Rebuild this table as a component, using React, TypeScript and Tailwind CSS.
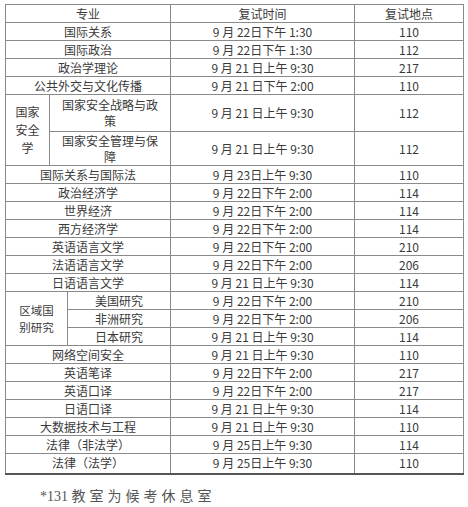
import React from "react";

type Row = { name: string; time: string; room: string };

const top: Row[] = [
  { name: "国际关系", time: "9 月 22日下午 1:30", room: "110" },
  { name: "国际政治", time: "9 月 22日下午 1:30", room: "112" },
  { name: "政治学理论", time: "9 月 21 日上午 9:30", room: "217" },
  { name: "公共外交与文化传播", time: "9 月 21 日下午 2:00", room: "110" },
];

const middle: Row[] = [
  { name: "国际关系与国际法", time: "9 月 23日上午 9:30", room: "110" },
  { name: "政治经济学", time: "9 月 22日下午 2:00", room: "114" },
  { name: "世界经济", time: "9 月 22日下午 2:00", room: "114" },
  { name: "西方经济学", time: "9 月 22日下午 2:00", room: "114" },
  { name: "英语语言文学", time: "9 月 22日下午 2:00", room: "210" },
  { name: "法语语言文学", time: "9 月 22日下午 2:00", room: "206" },
  { name: "日语语言文学", time: "9 月 21 日上午 9:30", room: "114" },
];

const area: Row[] = [
  { name: "美国研究", time: "9 月 22日下午 2:00", room: "210" },
  { name: "非洲研究", time: "9 月 22日下午 2:00", room: "206" },
  { name: "日本研究", time: "9 月 21 日上午 9:30", room: "114" },
];

const bottom: Row[] = [
  { name: "网络空间安全", time: "9 月 21 日上午 9:30", room: "110" },
  { name: "英语笔译", time: "9 月 22日下午 2:00", room: "217" },
  { name: "英语口译", time: "9 月 22日下午 2:00", room: "217" },
  { name: "日语口译", time: "9 月 21 日上午 9:30", room: "114" },
  { name: "大数据技术与工程", time: "9 月 21 日上午 9:30", room: "110" },
  { name: "法律（非法学）", time: "9 月 25日上午 9:30", room: "114" },
  { name: "法律（法学）", time: "9 月 25日上午 9:30", room: "110" },
];

const td = "border border-[#8a8a8a] p-0 text-center align-middle";

const Plain = ({ r, last }: { r: Row; last?: boolean }) => (
  <tr className={last ? "h-[20px]" : "h-[18px]"}>
    <td colSpan={3} className={td}>
      {r.name}
    </td>
    <td className={td}>{r.time}</td>
    <td className={td}>{r.room}</td>
  </tr>
);

export default function App() {
  return (
    <div className="w-[468px] h-[507px] bg-white pt-[4px] pl-[5px]">
      <table
        className="table-fixed border-collapse w-[458px] text-[12px] leading-[14px] text-[#3a3a3a] border-b-2 border-b-[#555]"
        style={{ fontFamily: '"Noto Sans CJK SC", sans-serif' }}
      >
        <colgroup>
          <col className="w-[44px]" />
          <col className="w-[18px]" />
          <col className="w-[103px]" />
          <col className="w-[184px]" />
          <col className="w-[109px]" />
        </colgroup>
        <tbody>
          <tr className="h-[18px]">
            <td colSpan={3} className={td}>
              专业
            </td>
            <td className={td}>复试时间</td>
            <td className={td}>复试地点</td>
          </tr>
          {top.map((r) => (
            <Plain key={r.name} r={r} />
          ))}
          <tr className="h-[37px]">
            <td rowSpan={2} className={`${td} leading-[18px]`}>
              国家
              <br />
              安全
              <br />
              学
            </td>
            <td colSpan={2} className={`${td} leading-[16px]`}>
              国家安全战略与政
              <br />策
            </td>
            <td className={td}>9 月 21 日上午 9:30</td>
            <td className={td}>112</td>
          </tr>
          <tr className="h-[34px]">
            <td colSpan={2} className={`${td} leading-[16px]`}>
              国家安全管理与保
              <br />障
            </td>
            <td className={td}>9 月 21 日上午 9:30</td>
            <td className={td}>112</td>
          </tr>
          {middle.map((r) => (
            <Plain key={r.name} r={r} />
          ))}
          {area.map((r, i) => (
            <tr key={r.name} className="h-[18px]">
              {i === 0 && (
                <td rowSpan={3} colSpan={2} className={`${td} text-[11.5px] leading-[17px]`}>
                  区域国
                  <br />
                  别研究
                </td>
              )}
              <td className={td}>{r.name}</td>
              <td className={td}>{r.time}</td>
              <td className={td}>{r.room}</td>
            </tr>
          ))}
          {bottom.map((r, i) => (
            <Plain key={r.name} r={r} last={i === bottom.length - 1} />
          ))}
        </tbody>
      </table>
      <p
        className="mt-[13px] ml-[35px] text-[14px] leading-[18px] text-[#555]"
        style={{ fontFamily: '"Liberation Serif", "Noto Sans CJK SC", serif' }}
      >
        *131 <span className="tracking-[4px]">教室为候考休息室</span>
      </p>
    </div>
  );
}
